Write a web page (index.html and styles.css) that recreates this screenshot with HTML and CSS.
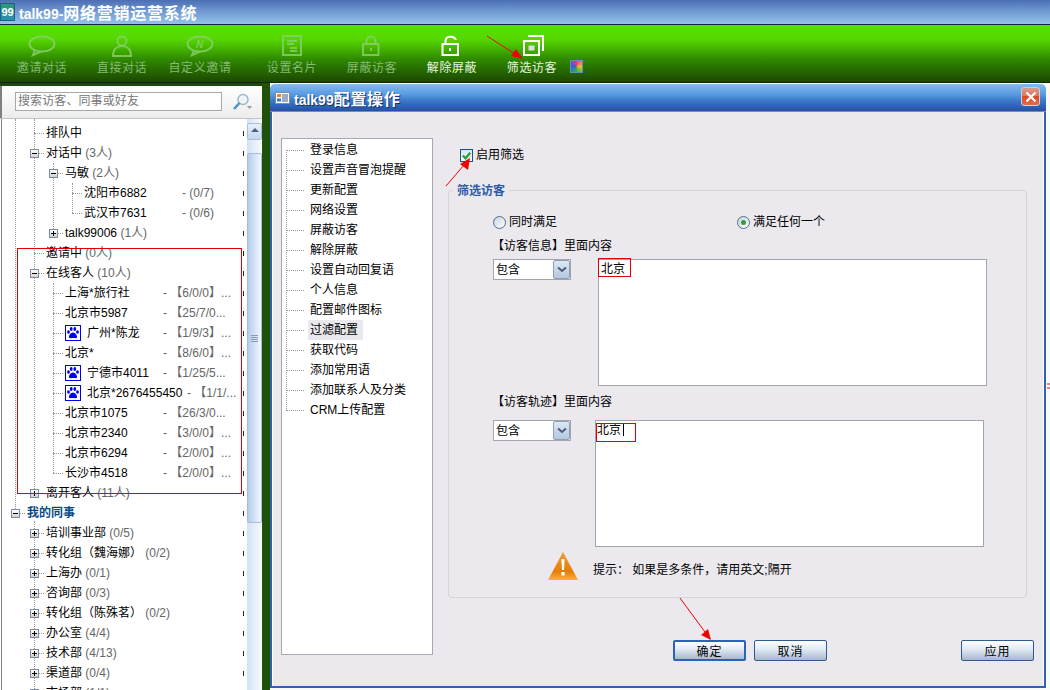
FILE: index.html
```html
<!DOCTYPE html>
<html lang="zh-CN">
<head>
    <meta charset="UTF-8">
    <title>talk99-网络营销运营系统</title>
    <link rel="stylesheet" href="styles.css">
</head>
<body>
    <header class="titlebar">
        <span class="logo">99</span>
        <span class="app-title"><span class="latin">talk99-</span>网络营销运营系统</span>
    </header>

    <nav class="toolbar">
        <div class="tool off">
            <svg class="tool-icon" viewBox="0 0 32 24"><ellipse cx="16" cy="11" rx="12.5" ry="7.5"/><path d="M9 17 L7 22 L15 18.5"/></svg>
            <span>邀请对话</span>
        </div>
        <div class="tool off">
            <svg class="tool-icon" viewBox="0 0 32 24"><circle cx="16" cy="8" r="4.5"/><path d="M7 23 C7 16 11 13 16 13 C21 13 25 16 25 23 Z"/></svg>
            <span>直接对话</span>
        </div>
        <div class="tool off narrow">
            <svg class="tool-icon" viewBox="0 0 32 24"><ellipse cx="16" cy="11" rx="12.5" ry="7.5"/><path d="M10 17 L8 22 L16 18.5"/><text x="16" y="15" class="icon-n">N</text></svg>
            <span>自定义邀请</span>
        </div>
        <div class="tool off spaced">
            <svg class="tool-icon" viewBox="0 0 32 24"><rect x="7" y="3" width="18" height="19"/><path d="M11 8 H21 M11 11 H18 M14 15 H21 M14 18 H21"/></svg>
            <span>设置名片</span>
        </div>
        <div class="tool off">
            <svg class="tool-icon" viewBox="0 0 32 24"><path d="M10.5 11 V8 C10.5 2 19.5 2 19.5 8 V11"/><rect x="7" y="11" width="15.5" height="11"/><path d="M15 15 V18"/></svg>
            <span>屏蔽访客</span>
        </div>
        <div class="tool">
            <svg class="tool-icon" viewBox="0 0 32 24"><path d="M9.5 11 V8 C9.5 3 18 2 20 7"/><rect x="6.5" y="11" width="15.5" height="11"/><path d="M14 15 V18"/></svg>
            <span>解除屏蔽</span>
        </div>
        <div class="tool">
            <svg class="tool-icon" viewBox="0 0 32 24"><path d="M12 3 H27 V18"/><rect x="8" y="8" width="15" height="14"/><rect x="12.5" y="12.5" width="6" height="5" class="icon-fill"/></svg>
            <span>筛选访客</span>
        </div>
        <span class="swatch"></span>
    </nav>

    <main class="main">
        <aside class="sidebar">
            <div class="search-bar">
                <div class="search-input">搜索访客、同事或好友</div>
                <svg class="search-icon" viewBox="0 0 20 18"><circle cx="11" cy="6.5" r="5" class="lens"/><path d="M7.5 10 L2 16" class="handle"/><path d="M15 13 H20 L17.5 16 Z" class="caret"/></svg>
            </div>
            <div class="tree-wrap">
                <div class="tree">
                    <i class="guide" style="left:15px;top:0;height:394px"></i>
                    <i class="guide" style="left:34px;top:0;height:378px"></i>
                    <i class="guide" style="left:34px;top:402px;height:180px"></i>
                    <i class="guide" style="left:53px;top:44px;height:70px"></i>
                    <i class="guide" style="left:53px;top:164px;height:190px"></i>
                    <i class="guide" style="left:72px;top:64px;height:30px"></i>

                    <div class="row l1"><span class="slot"><i class="twig"></i></span><span>排队中</span></div>
                    <div class="row l1"><span class="slot"><i class="exp minus"></i><i class="twig"></i></span><span>对话中 <em>(3人)</em></span></div>
                    <div class="row l2"><span class="slot"><i class="exp minus"></i><i class="twig"></i></span><span>马敏 <em>(2人)</em></span></div>
                    <div class="row l3"><span class="slot"><i class="twig"></i></span><span class="name">沈阳市6882</span><em>- (0/7)</em></div>
                    <div class="row l3"><span class="slot"><i class="twig"></i></span><span class="name">武汉市7631</span><em>- (0/6)</em></div>
                    <div class="row l2"><span class="slot"><i class="exp plus"></i><i class="twig"></i></span><span>talk99006 <em>(1人)</em></span></div>
                    <div class="row l1"><span class="slot"><i class="twig"></i></span><span>邀请中 <em>(0人)</em></span></div>
                    <div class="row l1"><span class="slot"><i class="exp minus"></i><i class="twig"></i></span><span>在线客人 <em>(10人)</em></span></div>
                    <div class="row l2"><span class="slot"><i class="twig"></i></span><span class="name">上海*旅行社</span><em>- 【6/0/0】...</em></div>
                    <div class="row l2"><span class="slot"><i class="twig"></i></span><span class="name">北京市5987</span><em>- 【25/7/0...</em></div>
                    <div class="row l2"><span class="slot"><i class="twig"></i></span><svg class="paw" viewBox="0 0 16 16"><use href="#paw"/></svg><span class="name short">广州*陈龙</span><em>- 【1/9/3】...</em></div>
                    <div class="row l2"><span class="slot"><i class="twig"></i></span><span class="name">北京*</span><em>- 【8/6/0】...</em></div>
                    <div class="row l2"><span class="slot"><i class="twig"></i></span><svg class="paw" viewBox="0 0 16 16"><use href="#paw"/></svg><span class="name short">宁德市4011</span><em>- 【1/25/5...</em></div>
                    <div class="row l2"><span class="slot"><i class="twig"></i></span><svg class="paw" viewBox="0 0 16 16"><use href="#paw"/></svg><span class="name long">北京*2676455450</span><em>- 【1/1/...</em></div>
                    <div class="row l2"><span class="slot"><i class="twig"></i></span><span class="name">北京市1075</span><em>- 【26/3/0...</em></div>
                    <div class="row l2"><span class="slot"><i class="twig"></i></span><span class="name">北京市2340</span><em>- 【3/0/0】...</em></div>
                    <div class="row l2"><span class="slot"><i class="twig"></i></span><span class="name">北京市6294</span><em>- 【2/0/0】...</em></div>
                    <div class="row l2"><span class="slot"><i class="twig"></i></span><span class="name">长沙市4518</span><em>- 【2/0/0】...</em></div>
                    <div class="row l1"><span class="slot"><i class="exp plus"></i><i class="twig"></i></span><span>离开客人 <em>(11人)</em></span></div>
                    <div class="row l0"><span class="slot"><i class="exp minus"></i><i class="twig"></i></span><strong>我的同事</strong></div>
                    <div class="row l1"><span class="slot"><i class="exp plus"></i><i class="twig"></i></span><span>培训事业部 <em>(0/5)</em></span></div>
                    <div class="row l1"><span class="slot"><i class="exp plus"></i><i class="twig"></i></span><span>转化组（魏海娜） <em>(0/2)</em></span></div>
                    <div class="row l1"><span class="slot"><i class="exp plus"></i><i class="twig"></i></span><span>上海办 <em>(0/1)</em></span></div>
                    <div class="row l1"><span class="slot"><i class="exp plus"></i><i class="twig"></i></span><span>咨询部 <em>(0/3)</em></span></div>
                    <div class="row l1"><span class="slot"><i class="exp plus"></i><i class="twig"></i></span><span>转化组（陈殊茗） <em>(0/2)</em></span></div>
                    <div class="row l1"><span class="slot"><i class="exp plus"></i><i class="twig"></i></span><span>办公室 <em>(4/4)</em></span></div>
                    <div class="row l1"><span class="slot"><i class="exp plus"></i><i class="twig"></i></span><span>技术部 <em>(4/13)</em></span></div>
                    <div class="row l1"><span class="slot"><i class="exp plus"></i><i class="twig"></i></span><span>渠道部 <em>(0/4)</em></span></div>
                    <div class="row l1"><span class="slot"><i class="exp plus"></i><i class="twig"></i></span><span>市场部 <em>(1/1)</em></span></div>
                </div>
                <div class="scrollbar">
                    <div class="scroll-up"></div>
                    <div class="scroll-thumb"><i></i></div>
                </div>
            </div>
        </aside>
        <div class="strip"></div>
        <div class="rest"></div>
    </main>

    <section class="dialog">
        <div class="dialog-title">
            <svg class="dialog-icon" viewBox="0 0 15 12"><rect x="0.5" y="0.5" width="14" height="11" fill="#fff" stroke="#7a8ca8"/><rect x="2" y="2" width="4" height="3" fill="#e08a20"/><rect x="2" y="6.5" width="4" height="3" fill="#3a78c8"/><path d="M7 3 H13 M7 5 H13 M7 7 H13 M7 9 H13" stroke="#3a5a90"/></svg>
            <span class="dialog-name"><span class="latin">talk99</span>配置操作</span>
            <span class="close">
                <svg viewBox="0 0 12 12"><path d="M1.5 1.5 L10.5 10.5 M10.5 1.5 L1.5 10.5"/></svg>
            </span>
        </div>
        <div class="dialog-body">
            <ul class="config-nav">
                <li><i class="twig"></i><span>登录信息</span></li>
                <li><i class="twig"></i><span>设置声音冒泡提醒</span></li>
                <li><i class="twig"></i><span>更新配置</span></li>
                <li><i class="twig"></i><span>网络设置</span></li>
                <li><i class="twig"></i><span>屏蔽访客</span></li>
                <li><i class="twig"></i><span>解除屏蔽</span></li>
                <li><i class="twig"></i><span>设置自动回复语</span></li>
                <li><i class="twig"></i><span>个人信息</span></li>
                <li><i class="twig"></i><span>配置邮件图标</span></li>
                <li class="selected"><i class="twig"></i><span>过滤配置</span></li>
                <li><i class="twig"></i><span>获取代码</span></li>
                <li><i class="twig"></i><span>添加常用语</span></li>
                <li><i class="twig"></i><span>添加联系人及分类</span></li>
                <li><i class="twig"></i><span>CRM上传配置</span></li>
            </ul>

            <div class="pane">
                <label class="check-row">
                    <span class="checkbox">
                        <svg viewBox="0 0 12 12"><path d="M2 6 L5 9 L10 3"/></svg>
                    </span>
                    启用筛选
                </label>

                <div class="group">
                    <span class="legend">筛选访客</span>
                    <div class="radios">
                        <label class="radio-item"><span class="radio"></span>同时满足</label>
                        <label class="radio-item"><span class="radio on"></span>满足任何一个</label>
                    </div>
                    <div class="field-label first">【访客信息】里面内容</div>
                    <div class="field">
                        <div class="combo"><span class="combo-text">包含</span><span class="combo-btn"><svg viewBox="0 0 10 7"><path d="M1 1.5 L5 5 L9 1.5"/></svg></span></div>
                        <div class="textbox wide-gap">北京<span class="mark mark-a"></span></div>
                    </div>
                    <div class="field-label second">【访客轨迹】里面内容</div>
                    <div class="field">
                        <div class="combo"><span class="combo-text">包含</span><span class="combo-btn"><svg viewBox="0 0 10 7"><path d="M1 1.5 L5 5 L9 1.5"/></svg></span></div>
                        <div class="textbox tight">北京<i class="text-caret"></i><span class="mark mark-b"></span></div>
                    </div>
                    <div class="hint">
                        <svg class="warn" viewBox="0 0 30 28">
                            <defs>
                                <linearGradient id="warnfill" x1="0" y1="0" x2="0" y2="1">
                                    <stop offset="0" stop-color="#f0a030"/>
                                    <stop offset="0.7" stop-color="#e87c08"/>
                                    <stop offset="1" stop-color="#f8b040"/>
                                </linearGradient>
                            </defs>
                            <path d="M15 0 L30 28 H0 Z" fill="url(#warnfill)"/>
                            <path d="M13.4 7 H16.6 L16 18 H14 Z M13.4 20 H16.6 V23.5 H13.4 Z" fill="#fff"/>
                        </svg>
                        <span class="hint-text">提示： 如果是多条件，请用英文;隔开</span>
                    </div>
                </div>

                <div class="actions">
                    <button class="btn default" type="button">确定</button>
                    <button class="btn" type="button">取消</button>
                    <button class="btn apply" type="button">应用</button>
                </div>
            </div>
        </div>
    </section>

    <svg class="marks" viewBox="0 0 1050 690">
        <defs>
            <g id="paw">
                <rect x="0.5" y="0.5" width="15" height="15" fill="#fff" stroke="#0000f0"/>
                <g fill="#0000f0">
                    <ellipse cx="3.5" cy="7" rx="1.4" ry="1.8"/>
                    <ellipse cx="6.2" cy="4" rx="1.4" ry="1.9"/>
                    <ellipse cx="9.8" cy="4" rx="1.4" ry="1.9"/>
                    <ellipse cx="12.5" cy="7" rx="1.4" ry="1.8"/>
                    <path d="M8 7.5 C10 7.5 12.5 10.5 12 12.5 C11.5 13.8 9.5 13 8 13 C6.5 13 4.5 13.8 4 12.5 C3.5 10.5 6 7.5 8 7.5 Z"/>
                </g>
            </g>
        </defs>
        <rect x="17.5" y="248.5" width="224" height="245" class="red-box"/>
        <path d="M487 36 L515 54" class="red-line"/>
        <path d="M523 59 L511 56 L516 49 Z" class="red-head"/>
        <path d="M446 186 L464 165" class="red-line"/>
        <path d="M470 158 L468 170 L460 164 Z" class="red-head"/>
        <path d="M680 598 L705 632" class="red-line"/>
        <path d="M711 640 L701 635 L708 629 Z" class="red-head"/>
        <path d="M1047 384 H1050 M1047 388 H1050" class="red-line"/>
    </svg>
</body>
</html>
```

FILE: styles.css
```css
html, body
{
    margin: 0;
    height: 690px;
    overflow: hidden;
}

body
{
    position: relative;
    display: flex;
    flex-direction: column;
    font-family: "Liberation Sans", "Noto Sans CJK SC", sans-serif;
    font-size: 12px;
    color: #000;
    background-color: #fff;
}

em
{
    font-style: normal;
    color: #666;
}

i
{
    display: block;
}

/* top window bar */

.titlebar
{
    height: 25px;
    flex: none;
    box-sizing: border-box;
    display: flex;
    align-items: center;
    gap: 4px;
    background: linear-gradient(#4c6fb4, #6d97cf 45%, #94c3ec);
    border-bottom: 1px solid #17263c;
}

.logo
{
    width: 15px;
    height: 18px;
    display: flex;
    align-items: center;
    justify-content: center;
    background: linear-gradient(#2a9a78, #2b8fb0);
    border: 1px solid #1f5f80;
    box-sizing: border-box;
    color: #fff;
    font-weight: bold;
    font-size: 11px;
}

.app-title
{
    color: #fff;
    font-size: 16px;
    font-weight: bold;
    letter-spacing: 0.75px;
}

.latin
{
    font-size: 14px;
    letter-spacing: 0;
}

/* green toolbar */

.toolbar
{
    height: 58px;
    flex: none;
    box-sizing: border-box;
    padding: 8px 0 0 2px;
    display: flex;
    align-items: flex-start;
    background: linear-gradient(#58de00, #55d800 25%, #2e8600 62%, #1c4800);
    border-bottom: 1px solid #10260a;
}

.tool
{
    width: 80px;
    flex: none;
    display: flex;
    flex-direction: column;
    align-items: center;
    gap: 3px;
    color: #e8f4e0;
    letter-spacing: 0.6px;
    line-height: 16px;
}

.tool.off
{
    color: #86b878;
}

.tool.narrow
{
    width: 76px;
}

.tool.spaced
{
    margin-left: 14px;
}

.tool-icon
{
    width: 32px;
    height: 24px;
    fill: none;
    stroke: #fff;
    stroke-width: 2;
}

.tool.off .tool-icon
{
    stroke: #8cd070;
    opacity: 0.8;
}

.icon-fill
{
    fill: #ddd;
    stroke: none;
}

.icon-n
{
    fill: #8cd070;
    stroke: none;
    font-size: 10px;
    font-weight: bold;
    font-style: italic;
    text-anchor: middle;
}

.swatch
{
    width: 13px;
    height: 13px;
    margin: 27px 0 0 -2px;
    box-sizing: border-box;
    border: 1px solid #5a90c0;
    background: conic-gradient(#e03a8a, #e8c020, #30b050, #3060d0, #e03a8a);
}

/* left side */

.main
{
    flex: 1;
    min-height: 0;
    display: flex;
    background-color: #1d4a00;
}

.sidebar
{
    width: 262px;
    flex: none;
    margin-top: 3px;
    display: flex;
    flex-direction: column;
    background-color: #fff;
    box-shadow: inset 1px 0 0 #fff, inset 2px 0 0 #808080;
}

.search-bar
{
    height: 33px;
    flex: none;
    box-sizing: border-box;
    padding: 6px 0 0 15px;
    display: flex;
    align-items: flex-start;
    gap: 10px;
    border-bottom: 1px solid #c4c4c4;
    background: linear-gradient(90deg, #808080 2px, transparent 2px), linear-gradient(#fff, #ececec);
}

.search-input
{
    width: 207px;
    height: 19px;
    box-sizing: border-box;
    padding-left: 2px;
    line-height: 17px;
    color: #777;
    background-color: #fff;
    border: 1px solid #a8a8a8;
    letter-spacing: 0.1px;
}

.search-icon
{
    width: 20px;
    height: 18px;
    margin-top: 1px;
}

.lens
{
    fill: #eef4f8;
    stroke: #a0b8c8;
    stroke-width: 1.5;
}

.handle
{
    stroke: #4a90c8;
    stroke-width: 2.5;
}

.caret
{
    fill: #999;
}

.tree-wrap
{
    flex: 1;
    min-height: 0;
    display: flex;
}

.tree
{
    width: 247px;
    flex: none;
    position: relative;
    padding-top: 4px;
    overflow: hidden;
}

.guide
{
    position: absolute;
    width: 0;
    border-left: 1px dotted #999;
}

.row
{
    height: 20px;
    display: flex;
    align-items: center;
    line-height: 20px;
    white-space: nowrap;
}

.row::after
{
    content: "";
    width: 1px;
    height: 5px;
    margin: 0 3px 0 auto;
    background-color: #222;
    flex: none;
}

.row.l0 { padding-left: 11px; }
.row.l1 { padding-left: 30px; }
.row.l2 { padding-left: 49px; }
.row.l3 { padding-left: 68px; }

.row strong
{
    color: #0b4a86;
}

.slot
{
    width: 14px;
    margin-right: 2px;
    flex: none;
    display: flex;
    align-items: center;
    position: relative;
}

.slot > .twig:only-child
{
    margin-left: 4px;
}

.twig
{
    flex: 1;
    height: 0;
    border-top: 1px dotted #999;
}

.exp
{
    width: 9px;
    height: 9px;
    flex: none;
    position: relative;
    background: linear-gradient(#fff, #d4d0c4);
    border: 1px solid #7a8ca8;
    box-sizing: border-box;
}

.exp::before
{
    content: "";
    position: absolute;
    left: 1px;
    top: 3px;
    width: 5px;
    height: 1px;
    background-color: #000;
}

.exp.plus::after
{
    content: "";
    position: absolute;
    left: 3px;
    top: 1px;
    width: 1px;
    height: 5px;
    background-color: #000;
}

.name
{
    width: 98px;
    flex: none;
}

.name.short
{
    width: 76px;
}

.name.long
{
    width: 100px;
}

.paw
{
    width: 16px;
    height: 16px;
    flex: none;
    margin-right: 6px;
}

.scrollbar
{
    width: 15px;
    flex: none;
    box-sizing: border-box;
    padding-top: 4px;
    background: linear-gradient(90deg, #d4e2f4, #f8fbff);
}

.scroll-up
{
    height: 17px;
    box-sizing: border-box;
    position: relative;
    border: 1px solid #a8c0dc;
    border-radius: 2px;
    background: linear-gradient(#e8f0fa, #c4d6ec);
}

.scroll-up::before
{
    content: "";
    position: absolute;
    left: 3px;
    top: 4px;
    width: 0;
    height: 0;
    border-left: 4px solid transparent;
    border-right: 4px solid transparent;
    border-bottom: 4px solid #4d6185;
}

.scroll-thumb
{
    height: 370px;
    margin-top: 13px;
    box-sizing: border-box;
    display: flex;
    align-items: center;
    justify-content: center;
    border: 1px solid #a8bcd8;
    border-radius: 2px;
    background: linear-gradient(90deg, #b4ccec, #f2f7ff);
}

.scroll-thumb i
{
    width: 7px;
    height: 7px;
    background: repeating-linear-gradient(#8a9ab0 0, #8a9ab0 1px, transparent 1px, transparent 2px);
}

.strip
{
    width: 8px;
    flex: none;
    background-color: #1f5208;
}

.rest
{
    flex: 1;
    background-color: #fafafa;
}

/* settings window */

.dialog
{
    position: absolute;
    left: 270px;
    top: 84px;
    width: 776px;
    height: 604px;
    box-sizing: border-box;
    display: flex;
    flex-direction: column;
    background-color: #ebe9ee;
    border: 2px solid #2f62b0;
    border-top: none;
    border-radius: 6px 6px 0 0;
    box-shadow: inset -1px 0 0 #fff, inset 1px 0 0 #fff;
}

.dialog-title
{
    height: 28px;
    flex: none;
    margin: 0 -2px;
    padding: 0 5px;
    box-sizing: border-box;
    display: flex;
    align-items: center;
    background: linear-gradient(#82bcf0, #5a9ae0 38%, #3a78c8 62%, #2450a8);
    border-bottom: 1px solid #8a8a90;
    border-radius: 6px 6px 0 0;
}

.dialog-icon
{
    width: 15px;
    height: 12px;
    margin-right: 4px;
}

.dialog-name
{
    color: #fff;
    font-size: 16px;
    font-weight: bold;
    letter-spacing: 0.7px;
    text-shadow: 1px 1px 0 #123070;
}

.close
{
    width: 19px;
    height: 19px;
    margin-left: auto;
    margin-right: 1px;
    margin-top: -2px;
    box-sizing: border-box;
    display: flex;
    align-items: center;
    justify-content: center;
    border: 1px solid #c8d0e0;
    border-radius: 3px;
    background: linear-gradient(#e09a88, #d87a60 45%, #dc4a22 50%, #e86a48);
}

.close svg
{
    width: 12px;
    height: 12px;
    fill: none;
    stroke: #fff;
    stroke-width: 2.2;
}

.dialog-body
{
    flex: 1;
    min-height: 0;
    display: flex;
    padding: 26px 0 0 9px;
}

.config-nav
{
    width: 152px;
    height: 517px;
    flex: none;
    box-sizing: border-box;
    margin: 0;
    padding: 1px 0 0 4px;
    list-style: none;
    position: relative;
    background-color: #fff;
    border: 1px solid #a8a8b0;
}

.config-nav::before
{
    content: "";
    position: absolute;
    left: 4px;
    top: 11px;
    height: 261px;
    border-left: 1px dotted #999;
}

.config-nav li
{
    height: 20px;
    display: flex;
    align-items: center;
    line-height: 20px;
}

.config-nav .twig
{
    flex: none;
    width: 18px;
    margin-right: 4px;
}

.config-nav span
{
    padding: 0 5px 0 2px;
}

.config-nav .selected span
{
    background-color: #e8e8ee;
}

.pane
{
    width: 586px;
    flex: none;
    margin-left: 15px;
}

.check-row
{
    height: 14px;
    margin: 10px 0 28px 12px;
    display: flex;
    align-items: center;
    gap: 3px;
    line-height: 14px;
}

.checkbox
{
    width: 13px;
    height: 13px;
    box-sizing: border-box;
    display: flex;
    background: linear-gradient(#d8e4ec, #f4f8fa);
    border: 1px solid #1d5288;
}

.checkbox svg
{
    fill: none;
    stroke: #20a030;
    stroke-width: 2.4;
}

.group
{
    width: 579px;
    height: 408px;
    box-sizing: border-box;
    position: relative;
    padding: 24px 0 0 44px;
    border: 1px solid #d4d4d8;
    border-radius: 4px;
}

.legend
{
    position: absolute;
    left: 4px;
    top: -8px;
    padding: 0 4px;
    line-height: 16px;
    font-weight: bold;
    color: #2f5ba8;
    background-color: #ebe9ee;
}

.radios
{
    height: 14px;
    display: flex;
}

.radio-item
{
    width: 244px;
    flex: none;
    display: flex;
    align-items: center;
    gap: 3px;
    line-height: 14px;
}

.radio
{
    width: 13px;
    height: 13px;
    box-sizing: border-box;
    position: relative;
    border: 1px solid #4a7096;
    border-radius: 50%;
    background: linear-gradient(135deg, #c8d4dc, #fff);
}

.radio.on::after
{
    content: "";
    position: absolute;
    left: 3px;
    top: 3px;
    width: 5px;
    height: 5px;
    border-radius: 50%;
    background-color: #30a040;
}

.field-label
{
    line-height: 14px;
    margin-left: -1px;
}

.field-label.first
{
    margin-top: 10px;
    margin-bottom: 6px;
}

.field-label.second
{
    margin-top: 9px;
    margin-bottom: 11px;
}

.field
{
    display: flex;
    align-items: flex-start;
}

.combo
{
    width: 78px;
    height: 21px;
    flex: none;
    box-sizing: border-box;
    padding-left: 2px;
    display: flex;
    align-items: center;
    justify-content: space-between;
    line-height: 17px;
    background-color: #fff;
    border: 1px solid #a4a4ac;
}

.combo-text
{
    padding-top: 1px;
}

.combo-btn
{
    width: 17px;
    height: 19px;
    box-sizing: border-box;
    display: flex;
    align-items: center;
    justify-content: center;
    background: linear-gradient(#dde7f2, #b4c8e0);
    border: 1px solid #8aa0bc;
    border-radius: 2px;
}

.combo-btn svg
{
    width: 10px;
    height: 7px;
    fill: none;
    stroke: #4d5d78;
    stroke-width: 2;
}

.textbox
{
    width: 389px;
    height: 127px;
    box-sizing: border-box;
    position: relative;
    padding: 0 0 0 2px;
    display: flex;
    align-items: flex-start;
    line-height: 18px;
    background-color: #fff;
    border: 1px solid #a4a4ac;
}

.textbox.wide-gap
{
    margin-left: 27px;
}

.textbox.tight
{
    margin-left: 24px;
    padding-left: 1px;
}

.text-caret
{
    width: 1px;
    height: 13px;
    margin: 2px 0 0 2px;
    background-color: #000;
}

.mark
{
    position: absolute;
    box-sizing: border-box;
    border: 1px solid #e00000;
}

.mark-a
{
    left: -1px;
    top: -2px;
    width: 33px;
    height: 19px;
}

.mark-b
{
    left: 0;
    top: 2px;
    width: 40px;
    height: 19px;
}

.hint
{
    margin-top: 5px;
    padding-left: 55px;
    display: flex;
    align-items: center;
    gap: 15px;
}

.hint-text
{
    margin-top: 4px;
}

.warn
{
    width: 30px;
    height: 28px;
    flex: none;
}

.actions
{
    margin-top: 42px;
    padding-left: 225px;
    display: flex;
    gap: 8px;
}

.btn
{
    width: 73px;
    height: 21px;
    padding: 0;
    font: inherit;
    color: #000;
    letter-spacing: 1px;
    border: 1px solid #2f5a90;
    border-radius: 2px;
    background: linear-gradient(#fdfeff, #e4ecf6 40%, #a8b8cc);
    cursor: pointer;
}

.btn.default
{
    border: 2px solid #2a62c0;
}

.btn.apply
{
    margin-left: auto;
}

/* red notes drawn on top of the shot */

.marks
{
    position: absolute;
    left: 0;
    top: 0;
    width: 1050px;
    height: 690px;
    pointer-events: none;
}

.red-box
{
    fill: none;
    stroke: #e00000;
}

.red-line
{
    fill: none;
    stroke: #f00000;
}

.red-head
{
    fill: #f00000;
}
```
